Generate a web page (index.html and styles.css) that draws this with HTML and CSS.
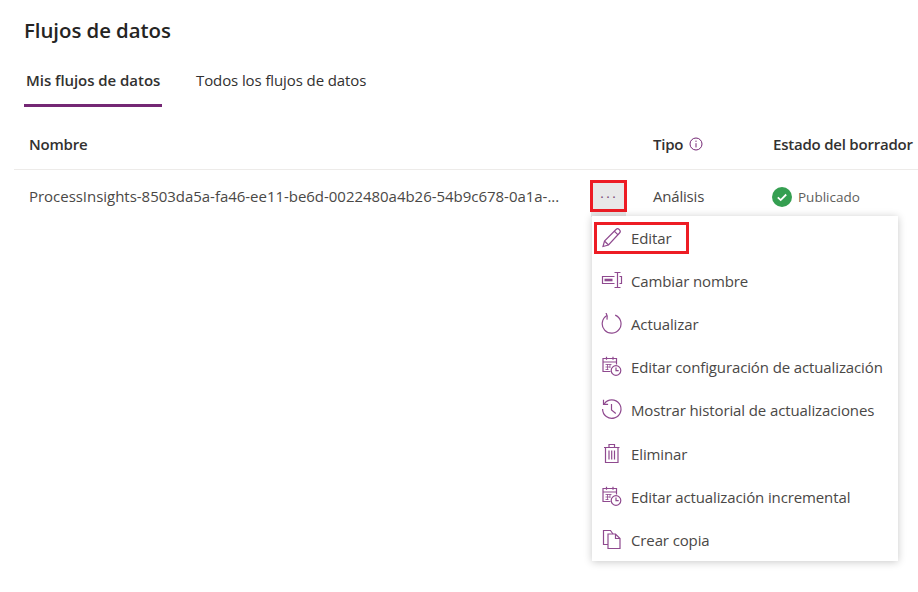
FILE: index.html
```html
<!DOCTYPE html>
<html lang="es">
<head>
<meta charset="utf-8">
<title>Flujos de datos</title>
<link rel="stylesheet" href="styles.css">
</head>
<body>
<main class="page">
  <h1 class="title">Flujos de datos</h1>
  <nav class="tabs">
    <a class="tab tab-active">Mis flujos de datos</a>
    <a class="tab">Todos los flujos de datos</a>
  </nav>
  <div class="table">
    <div class="row head">
      <div class="c-name">Nombre</div>
      <div class="c-more"></div>
      <div class="c-type">Tipo
        <svg class="info" viewBox="0 0 14 14"><circle cx="7" cy="7" r="6"/><path d="M7 6.2v4.2M7 3.6v1.3"/></svg>
      </div>
      <div class="c-state">Estado del borrador</div>
    </div>
    <div class="row body">
      <div class="c-name">ProcessInsights-8503da5a-fa46-ee11-be6d-0022480a4b26-54b9c678-0a1a-...</div>
      <div class="c-more"><button class="more"><span class="dots">···</span></button></div>
      <div class="c-type">Análisis</div>
      <div class="c-state status">
        <svg class="ok" viewBox="0 0 20 20"><circle cx="10" cy="10" r="10"/><path d="M5.8 10.4l2.9 2.7 5.5-5.6"/></svg>
        <span>Publicado</span>
      </div>
    </div>
  </div>
  <ul class="menu">
    <li class="item item-marked">
      <svg class="ico" viewBox="0 0 22 22"><path d="M2 19.5l1.5-5.5L15 2.5c.9-.9 2.3-.9 3.2 0l.3.3c.9.9.9 2.3 0 3.2L7.5 18 2 19.5zM3.5 14l4 4M13.3 4.2l4 4"/></svg>
      <span>Editar</span>
    </li>
    <li class="item">
      <svg class="ico" viewBox="0 0 22 22"><path d="M13.5 2.5h6M13.5 17.5h6M16.5 2.5v15"/><path d="M13.5 6.5H1.5v7h12M18.5 6.5h2v7h-2"/><path class="fill" d="M3.5 8.7h8v2.6h-8z"/></svg>
      <span>Cambiar nombre</span>
    </li>
    <li class="item">
      <svg class="ico" viewBox="0 0 22 22"><path d="M6 2.6a9.4 9.4 0 1 0 8.2-.5"/><path d="M5 -.2L6.2 3l-.2 3.600"/></svg>
      <span>Actualizar</span>
    </li>
    <li class="item">
      <svg class="ico" viewBox="0 0 22 22"><path d="M9.500 15.500h-7.500V2.500h13.500v6M2 6h13.500M5.500 .8v3M12 .8v3"/><path class="thin" d="M4.500 8.500h6M4.500 11h4.500M4.500 13.500h3M6.500 8v6M9 8v4"/><circle cx="15" cy="14.500" r="4.800"/><path d="M15 11.500v3.200h2.700"/></svg>
      <span>Editar configuración de actualización</span>
    </li>
    <li class="item">
      <svg class="ico" viewBox="0 0 22 22"><path d="M3.300 4.800A9.200 9.200 0 1 1 1.600 10"/><path d="M2.500 .8v4.600h4.600M10.500 5v6l4.300 3.500"/></svg>
      <span>Mostrar historial de actualizaciones</span>
    </li>
    <li class="item">
      <svg class="ico" viewBox="0 0 22 22"><path d="M4.500 4.500h12.500v15h-12.500zM3 4.500h15.500M8 4.500v-3h5.500v3M8 7.500v9M10.700 7.500v9M13.500 7.500v9"/></svg>
      <span>Eliminar</span>
    </li>
    <li class="item">
      <svg class="ico" viewBox="0 0 22 22"><path d="M9.500 15.500h-7.500V2.500h13.500v6M2 6h13.500M5.500 .8v3M12 .8v3"/><path class="thin" d="M4.500 8.500h6M4.500 11h4.500M4.500 13.500h3M6.500 8v6M9 8v4"/><circle cx="15" cy="14.500" r="4.800"/><path d="M15 11.500v3.200h2.700"/></svg>
      <span>Editar actualización incremental</span>
    </li>
    <li class="item">
      <svg class="ico" viewBox="0 0 22 22"><path d="M7 15.500H2.500v-14h7l2.500 3.500"/><path d="M7 5h7.500l4.500 4.500v10H7zM14.500 5v4.500H19"/></svg>
      <span>Crear copia</span>
    </li>
  </ul>
</main>
</body>
</html>
```

FILE: styles.css
```css
* { box-sizing: border-box; }
html, body { margin: 0; padding: 0; background: #fff; overflow: hidden; }
body { width: 918px; height: 592px; font-family: "Open Sans", "Noto Sans", "Liberation Sans", sans-serif; color: #323130; }
.page { position: relative; height: 592px; padding: 15px 0 0 14px; }
.title { margin: 0 0 0 10px; font-size: 20.4px; font-weight: 600; line-height: 30px; color: #252423; letter-spacing: -0.05px; }
.tabs { display: flex; margin: 13px 0 0 10px; gap: 32px; }
.tab { display: block; height: 49px; padding: 12px 2px 0; font-size: 15px; line-height: 20px; color: #323130; letter-spacing: -0.1px; }
.tab-active { width: 138px; font-weight: 600; border-bottom: 3px solid #742774; letter-spacing: -0.05px; white-space: nowrap; }
.table { margin-top: 16px; }
.row { display: flex; align-items: center; padding-left: 15px; font-size: 15px; }
.head { height: 47px; font-weight: 600; color: #323130; border-bottom: 1px solid #edebe9; letter-spacing: -0.22px; padding-bottom: 5px; }
.body { height: 54px; color: #4a4846; padding-bottom: 3px; }
.c-name { width: 561px; white-space: nowrap; }
.body .c-name { letter-spacing: -0.03px; }
.c-more { width: 63px; display: flex; }
.c-type { width: 120px; display: flex; align-items: center; gap: 6px; }
.body .c-type { letter-spacing: -0.2px; }
.c-state { white-space: nowrap; }
.info { width: 14px; height: 14px; fill: none; stroke: #742774; stroke-width: 1; }
.more { position: relative; width: 35px; height: 37px; margin: 5px 0 0 1px; padding: 0 0 5px; border: 0; background: #e8e8e8; color: #7d4f7d; font-size: 15px; line-height: 28px; }
.more::after { content: ""; position: absolute; left: -1px; top: 0; width: 31px; height: 26px; border: 3px solid #ed1c24; }
.dots { font-family: "Liberation Sans", sans-serif; letter-spacing: 1px; }
.status { display: flex; align-items: center; gap: 6px; margin: 2px 0 0 -1px; font-size: 13.5px; color: #605e5c; }
.ok { width: 20px; height: 20px; }
.ok circle { fill: #359f51; }
.ok path { fill: none; stroke: #fff; stroke-width: 1.8; }
.menu { position: absolute; left: 592px; top: 216px; width: 306px; height: 345px; margin: 0; padding: 0; list-style: none; background: #fff; box-shadow: 0 1px 8px rgba(0,0,0,.22); }
.item { display: flex; align-items: center; height: 43.22px; padding-left: 9px; gap: 8px; font-size: 15px; color: #4a4846; white-space: nowrap; letter-spacing: -0.12px; }
.item-marked { position: relative; }
.item-marked::after { content: ""; position: absolute; left: 2px; top: 6px; width: 89px; height: 26px; border: 3px solid #ed1c24; }
.ico { flex: none; width: 22px; height: 22px; fill: none; stroke: #8f4a8f; stroke-width: 1.2; }
.ico .fill { fill: #8f4a8f; stroke: none; }
.ico .thin { stroke-width: .8; }
```
